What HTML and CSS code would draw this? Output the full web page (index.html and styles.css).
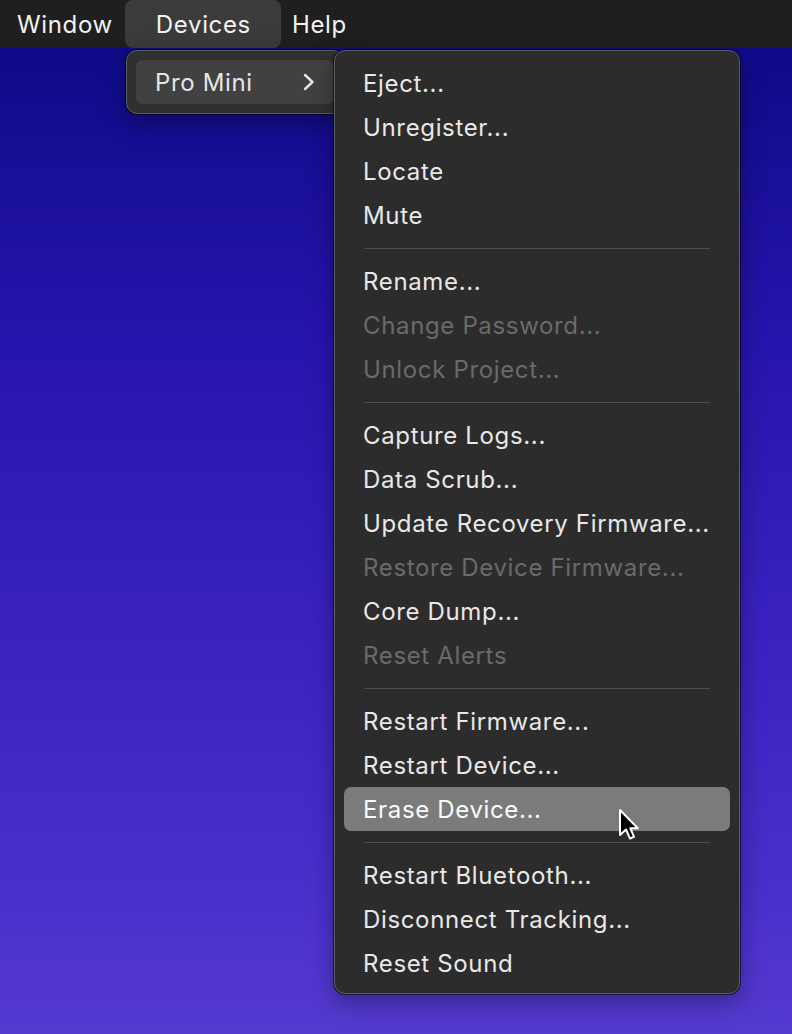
FILE: index.html
```html
<!DOCTYPE html>
<html lang="en">
<head>
  <meta charset="UTF-8">
  <title>Devices Menu</title>
  <link rel="stylesheet" href="styles.css">
</head>
<body>

  <!-- Menu bar -->
  <div class="menubar">
    <span class="bar-item first">Window</span>
    <span class="bar-item open">Devices</span>
    <span class="bar-item">Help</span>
  </div>

  <div class="desktop">

    <!-- Devices dropdown -->
    <div class="menu device-list">
      <div class="item selected">
        <span>Pro Mini</span>
        <svg class="chevron" width="14" height="18" viewBox="0 0 14 18">
          <path d="M3 2 L10.5 9 L3 16" fill="none" stroke="#e4e4e4" stroke-width="2.4" stroke-linecap="round" stroke-linejoin="round"/>
        </svg>
      </div>
    </div>

    <!-- Pro Mini submenu -->
    <div class="menu actions">
      <div class="item">Eject...</div>
      <div class="item">Unregister...</div>
      <div class="item">Locate</div>
      <div class="item">Mute</div>
      <div class="sep"></div>
      <div class="item">Rename...</div>
      <div class="item off">Change Password...</div>
      <div class="item off">Unlock Project...</div>
      <div class="sep"></div>
      <div class="item">Capture Logs...</div>
      <div class="item">Data Scrub...</div>
      <div class="item">Update Recovery Firmware...</div>
      <div class="item off">Restore Device Firmware...</div>
      <div class="item">Core Dump...</div>
      <div class="item off">Reset Alerts</div>
      <div class="sep"></div>
      <div class="item">Restart Firmware...</div>
      <div class="item">Restart Device...</div>
      <div class="item hover">Erase Device...</div>
      <div class="sep"></div>
      <div class="item">Restart Bluetooth...</div>
      <div class="item">Disconnect Tracking...</div>
      <div class="item">Reset Sound</div>
    </div>

    <!-- Mouse pointer -->
    <svg class="cursor" width="26" height="38" viewBox="-3 -3 26 38">
      <path d="M0 0 L0 25 L6 19.5 L10 28.5 L14 26.8 L10.3 18.2 L17.8 18.2 Z" fill="#000" stroke="#fff" stroke-width="2" stroke-linejoin="round"/>
    </svg>
  </div>

</body>
</html>
```

FILE: styles.css
```css
/* Basic Styles */
* {
  margin: 0;
  padding: 0;
  box-sizing: border-box;
}

body {
  font-family: 'Inter', 'Liberation Sans', sans-serif;
  letter-spacing: 0.65px;
  width: 792px;
  height: 1034px;
  overflow: hidden;
  background-color: #1e1e1e;
}

/* Top menu bar */
.menubar {
  height: 48px;
  background-color: #1f1f1f;
  display: flex;
  align-items: stretch;
  color: #f2f2f2;
  font-size: 24px;
}

.bar-item {
  display: flex;
  align-items: center;
  margin-left: 11px;
}

.bar-item.first {
  margin-left: 17px;
}

.bar-item.open {
  margin-left: 12px;
  padding: 0 30px 0 31px;
  background-color: #3b3b3b;
  border-radius: 8px;
}

/* Wallpaper area */
.desktop {
  position: relative;
  height: 986px;
  background: linear-gradient(180deg, #0f0a88 0%, #2615ad 30%, #3a22c0 60%, #4a2ecb 85%, #553ad0 100%);
}

/* Menus */
.menu {
  position: absolute;
  background-color: #2c2c2c;
  border: 1px solid #5c5c5c;
  border-radius: 11px;
  box-shadow: 0 0 0 1px rgba(0, 0, 0, 0.55), 0 8px 24px rgba(0, 0, 0, 0.35);
  color: #e8e8e8;
  font-size: 24px;
}

.item {
  height: 44px;
  display: flex;
  align-items: center;
  margin: 0 9px;
  padding-left: 19px;
  border-radius: 7px;
  white-space: nowrap;
}

.item.off {
  color: #6a6a6a;
}

.item.hover {
  background-color: #7b7b7b;
  color: #fafafa;
}

.sep {
  height: 22px;
  display: flex;
  align-items: center;
  margin: 0 29px;
}

.sep::after {
  content: "";
  flex: 1;
  height: 1px;
  background-color: #4e4e4e;
}

.device-list {
  left: 126px;
  top: 2px;
  width: 218px;
  padding: 9px 0;
  background-color: #303030;
}

.device-list .item {
  justify-content: space-between;
  padding-right: 18px;
  background-color: #414141;
  color: #e6e6e6;
}

.actions {
  left: 334px;
  top: 2px;
  width: 406px;
  padding: 10px 0 8px;
}

.cursor {
  position: absolute;
  left: 617px;
  top: 759px;
}
```
